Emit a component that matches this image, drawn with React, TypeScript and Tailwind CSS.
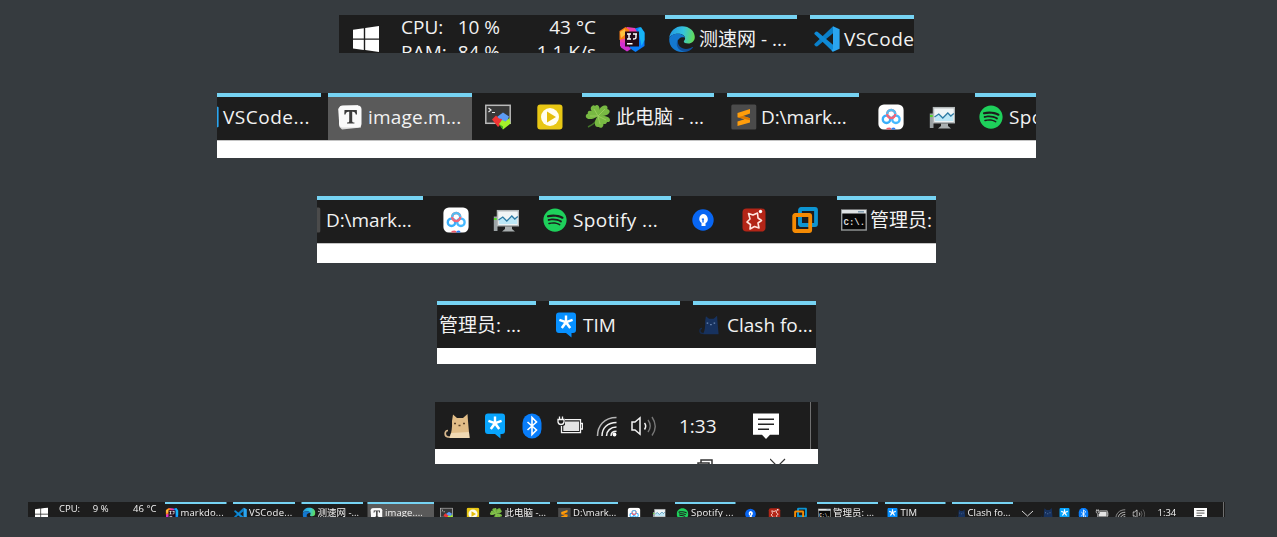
import React from "react";
import { FaSpotify } from "react-icons/fa";

type P = { children?: React.ReactNode; className?: string };

const Svg = ({ children, className = "" }: P) => (
  <svg viewBox="0 0 26 26" className={`h-[26px] w-[26px] shrink-0 ${className}`} fill="none">
    {children}
  </svg>
);

const Windows = ({ className }: P) => (
  <Svg className={className}>
    <path fill="#fff" d="M0 3.7 10.8 2.2v10.3H0zM12.2 2 26 0v12.500H12.200zM0 13.800h10.800V24L0 22.500zM12.200 13.800H26V26l-13.800-1.900z" />
  </Svg>
);

const Idea = ({ className }: P) => (
  <Svg className={className}>
    <path fill="#087cfa" d="m14 3 7-2 4.500 5v14l-9 6-6-4z" />
    <path fill="#17b4f5" d="m19 3 3-2 3.500 6v7l-3 6z" />
    <path fill="#e93db0" d="M1 8 8 1l8 1 2 4-8 14-3 4-6-4z" />
    <path fill="#f97a12" d="m.5 5 6-4 4 3-2 8-8 2z" />
    <path fill="#fdc23d" d="m1 6 5-3 1 5-5 4z" />
    <path fill="#d22fd0" d="m1 16 6 1 5 6-4 2.500-6-4z" />
    <path fill="#220b18" d="M6 5.500h14v15H6z" />
    <path stroke="#fff" strokeWidth="1.400" d="M8 8h4M10 8v5M8 13h4M14 8h4M17 8v3.500q0 1.700-3 1.500M8 17.800h5.500" />
  </Svg>
);

const Edge = ({ className }: P) => (
  <Svg className={className}>
    <defs>
      <linearGradient id="edgeTop" x1="2" y1="6" x2="25" y2="11" gradientUnits="userSpaceOnUse">
        <stop stopColor="#249de2" />
        <stop offset=".5" stopColor="#34c3df" />
        <stop offset="1" stopColor="#62dc58" />
      </linearGradient>
    </defs>
    <path fill="url(#edgeTop)" d="M.2 12C1 5 6.500.2 13 .2c7.500 0 12.800 5 12.800 10.800 0 4-3 6.500-6.500 6.500-3 0-4.500-1-4.500-2 0-.8 1.300-1.300 1.300-3.200 0-2.500-3-4.600-7-4.600C5 7.700 1.500 9.500.2 12" />
    <path fill="#1478cf" d="M.2 13C.7 9.500 4.800 7.700 9 7.700c3.800 0 6.600 1.700 7 4-3-1.500-7.500.5-7.500 4.800 0 4.500 4.500 9 9.500 8.500-1.500.7-3.300 1-5 1C5.500 26 0 20.500.2 13" />
    <path fill="#10509c" d="M9 13.500c-1.200 6 3.500 9.500 8 9.500 3 0 5-1.200 6.200-2 .5-.2.900.2.600.7C21.500 24.800 18 26 15.500 25.600 8.500 25 6 18 9 13.500" />
  </Svg>
);

const Code = ({ className }: P) => (
  <Svg className={className}>
    <path fill="#0a7fc9" d="M19 .300v7L3.500 20.200 2 20.500.400 19V18z" />
    <path fill="#0f8ad6" d="M19 25.700v-7L3.500 5.800 2 5.500.400 7V8z" />
    <path fill="#2aa5f0" d="M19 .200 25.600 3.300v19.400L19 25.800l-1.500-1 1.500-2z" />
  </Svg>
);

const Typora = ({ className }: P) => (
  <Svg className={className}>
    <path fill="#d9d9d9" d="M1 5 3.500 2 21 1l3 22.500L5 25.500 2.500 23z" />
    <rect x="2" y="1.500" width="22.500" height="22" rx="4" fill="#fafafa" />
    <path fill="#3b3b3b" d="M7.500 6h12.300l.2 4.500h-1.300c-.4-2-.9-2.800-3-2.800h-.5V17c0 1.200.7 1.400 2.200 1.500v1H10v-1c1.600-.1 2.200-.3 2.200-1.500V7.700h-.7c-2 0-2.500.8-3 2.800H7.300z" />
  </Svg>
);

const MobaTerm = ({ className }: P) => (
  <Svg className={className}>
    <rect x=".8" y="1.300" width="24.400" height="18" fill="#383838" stroke="#b9b9b9" strokeWidth="1.500" />
    <path stroke="#e5e5e5" strokeWidth="1.200" d="m3.500 4 2.500 2-2.500 2M7 8.500h3" />
    <path fill="#5c9bf4" d="m12 13 6-4.500 6 4-2 5-6 1z" />
    <path fill="#f03434" d="m7 15.500 4-4 3 3 3 .500-1 5-3 3z" />
    <path fill="#a4f02b" d="m14 20 3-4 3.500 1.500 4-3.500 1 5.500-7.500 6z" />
    <path fill="#3fae22" d="m14 20 4 2.500v3z" />
  </Svg>
);

const Player = ({ className }: P) => (
  <Svg className={className}>
    <rect x=".3" y=".5" width="25.200" height="25" rx="3" fill="#e8c714" />
    <circle cx="13" cy="13" r="9" fill="#fffdf0" />
    <path fill="#e5bd0b" d="m10 7.500 9 5.500-9 5.500z" />
  </Svg>
);

const Clover = ({ className }: P) => (
  <Svg className={className}>
    <path d="M13 12Q12 19 3 23" stroke="#427529" strokeWidth="1.600" />
    <g fill="#78b943">
      <path d="M13 12C5 8 5 4 6.500 2.500c2-2 3-1 3.500-.5 3-3 7 2 3 10" />
      <path d="M13 12c0-9 5-11 8-10.500 2 .8 1.500 2.500 1.300 3.500C27.500 6.500 24 13 13 12" />
      <path d="M13 12C6 17 1 15 .800 12.500c-.1-2 1-2.500 2-2.800C2 5 8 6 13 12" />
      <path d="M13 12c9-1 12.500 2 12 4.500-.4 1.800-2 1.700-3 1.500-.5 3-6 4-9-6" />
      <path d="M13 12c7 6 6 10 4 11.500-1.500.7-2.500.2-3.200-.5C9.500 24 8 18 13 12" />
    </g>
    <path d="m13 12-4-7m4 7 7-7m-7 7H5m8 0 8 4m-8-4 2 8" stroke="#a5d664" strokeWidth=".7" />
  </Svg>
);

const Sublime = ({ className }: P) => (
  <Svg className={className}>
    <rect x=".3" y=".5" width="25" height="25" rx="1.500" fill="#4b4b4b" />
    <path fill="#ff9d0b" d="m6.500 9 12.500-4v4.500L12 12l7 2.300v4.200L6.500 22v-4.500l7-2.200-7-2z" />
    <path fill="#dc7800" d="m6.500 13.300 5.500-1.300 7 2.300v2z" />
  </Svg>
);

const Baidu = ({ className }: P) => (
  <Svg className={className}>
    <rect x=".4" y=".5" width="25.200" height="25" rx="5.500" fill="#fff" />
    <circle cx="8.500" cy="15.300" r="3.700" stroke="#3aaefa" strokeWidth="2.400" />
    <circle cx="17.900" cy="15.300" r="3.700" stroke="#45b9ff" strokeWidth="2.400" />
    <circle cx="13.200" cy="10" r="4" stroke="#f36577" strokeWidth="2.400" />
    <path d="M9.200 10A4 4 0 0 1 17.200 10" stroke="#55bbef" strokeWidth="2.400" />
    <path fill="#f15a6a" d="M8.500 24q5-1.500 5 1.500h-5z" />
    <path fill="#287cf3" d="M13.500 24q4-1.500 4 1.500h-4z" />
  </Svg>
);

const Monitor = ({ className }: P) => (
  <Svg className={className}>
    <rect x=".8" y="9.500" width="3.700" height="14.500" fill="#9ba2a4" />
    <path fill="#57d62a" d="M1 11h4v2H1z" />
    <rect x="4.500" y="3.700" width="21" height="15" fill="#f0f5f6" stroke="#b2b7b8" strokeWidth="1.500" />
    <path fill="#bde7f6" d="m6 13 4-3 4 4 5-4 5 2v5H6z" />
    <path stroke="#2d7ba5" strokeWidth="1.300" d="m5.500 13 4.300-3 4 4 5-5 3 3 3-2.500" />
    <path fill="#a9afb0" d="M12 19.500h7v2.500l3 2.500H9l3-2.500z" />
  </Svg>
);

const Spotify = ({ className = "" }: P) => (
  <div className={`flex h-[26px] w-[26px] shrink-0 items-center justify-center ${className}`}>
    <FaSpotify className="h-[24px] w-[24px] text-[#1ed05b]" />
  </div>
);

const Pin = ({ className }: P) => (
  <Svg className={className}>
    <circle cx="13" cy="13" r="10.700" fill="#0866f3" />
    <path fill="#fff" d="M13 7a5 5 0 0 1 2.500 9.200V19h-4v-3A5 5 0 0 1 13 7" />
    <path stroke="#0866f3" strokeWidth="1.300" d="M13 11.500v4M11.800 12.200h2.200" />
  </Svg>
);

const Star = ({ className }: P) => (
  <Svg className={className}>
    <rect x="1.500" y="1.500" width="23" height="23" rx="4" fill="#b32517" />
    <path stroke="#ffe5df" strokeWidth="1.600" strokeLinejoin="round" d="m7.500 6.500 4.500 1.500 4.500-2 .5 5 3.500 2.500-3.500 2.500 1 5-4.500-1.500-4.500 2.500.5-4.500-3.500-2.500 3-3z" />
    <circle cx="19.500" cy="4.500" r="1.700" fill="#fff" />
  </Svg>
);

const VMware = ({ className }: P) => (
  <Svg className={className}>
    <rect x="8" y="2" width="16" height="16" rx="1" stroke="#0d95d2" strokeWidth="3.800" />
    <rect x="2.200" y="8" width="16" height="16" rx="1" stroke="#f58b04" strokeWidth="3.800" />
    <path stroke="#0d95d2" strokeWidth="3.800" d="M8 10v6q0 2 2 2h6" />
  </Svg>
);

const Cmd = ({ className }: P) => (
  <Svg className={className}>
    <rect x=".7" y="3" width="24.500" height="20" fill="#080808" stroke="#969a9b" strokeWidth="1.400" />
    <path fill="#dfe2e3" d="M1 3h24v3.500H1z" />
    <path fill="#819daf" d="M17 4h6v1.500h-6z" />
    <text x="2.500" y="18" fill="#d8d8d8" fontFamily="Liberation Mono" fontSize="9" fontWeight="bold">C:\.</text>
  </Svg>
);

const Bubble = ({ className, fill = "#0790ff" }: P & { fill?: string }) => (
  <Svg className={className}>
    <path fill={fill} d="M6 .500h14a3 3 0 0 1 3 3V18a3 3 0 0 1-3 3h-1.500v4.500L13 21H6a3 3 0 0 1-3-3V3.500a3 3 0 0 1 3-3" />
    <path fill="#fff" d="M11.800 3.500h2.400v5l5-1.800.8 2.200-5 1.800 3.200 4.600-2 1.400L13 12.500l-3.200 4.200-2-1.400 3.200-4.600-5-1.800.8-2.200 5 1.800z" />
  </Svg>
);

const Cat = ({ className, tan = false }: P & { tan?: boolean }) => (
  <Svg className={className}>
    <path stroke={tan ? "#d9b98e" : "#162c50"} strokeWidth="1.700" d="M4 17.500c-3.500 0-4 6 0 6.500h6" />
    <path fill={tan ? "#e2bd87" : "#17325f"} d="M5.500 25q3-7 2.500-17L9 1.500 13 5h6l4.500-4L24 8l1.500 17z" />
    {tan && <path fill="#f1d9b2" d="m7 20 18-1 .5 6H5.500z" />}
    <path stroke={tan ? "#5c432b" : "#6f8bb5"} strokeWidth="1.500" d="M10 10.500h2M19 10.500h2M14.500 12.500h2" />
  </Svg>
);

const Bluetooth = ({ className }: P) => (
  <Svg className={className}>
    <rect x="3.500" y=".5" width="19" height="25" rx="9.500" fill="#087dfa" />
    <path stroke="#fff" strokeWidth="1.600" d="m8.500 9 9 8-4.500 4.500v-17l4.500 4.500-9 8" />
  </Svg>
);

const Battery = ({ className }: P) => (
  <Svg className={className}>
    <path stroke="#f4f4f4" strokeWidth="1.300" d="M8 6.700h15.500v13H4.500V13M24 10.500h1.500v5.500H24" />
    <path fill="#e4e4e4" d="M8 8.500h14v9.500H6.300v-5l1.700-1z" />
    <path fill="#1d1d1d" stroke="#f4f4f4" strokeWidth="1.300" d="M1 6.500h6V9Q6.500 11.500 4 11.500T1 9zM2.500 3.500v3M5.500 3.500v3" />
  </Svg>
);

const Wifi = ({ className }: P) => (
  <Svg className={className}>
    <path stroke="#b3b3b3" strokeWidth="1.500" d="M3.500 23C3.500 13 10 4.500 22.500 4.500" />
    <path stroke="#f1f1f1" strokeWidth="1.500" d="M8 23C8 15 13.500 9.500 22.500 9.500M12.500 23c0-5 4-9 10-9M17 23c0-3 2-4.700 5.500-4.700" />
    <circle cx="20.500" cy="21.500" r="1.900" fill="#fff" />
  </Svg>
);

const Speaker = ({ className }: P) => (
  <Svg className={className}>
    <path stroke="#f2f2f2" strokeWidth="1.500" d="M1 9h3l5-4.200v16.400L4 17H1z" />
    <path stroke="#f2f2f2" strokeWidth="1.500" d="M13.500 10q2.400 3 0 6.500" />
    <path stroke="#777" strokeWidth="1.400" d="M17 7q4.500 6 0 12M21 4q6.500 9.500 0 18.500" />
  </Svg>
);

const Notice = ({ className }: P) => (
  <Svg className={className}>
    <path fill="#fff" d="M0 .500h26v21.300h-9L13 26l-4-4.200H0z" />
    <path stroke="#252525" strokeWidth="1.500" d="M5 6.200h16M5 11.200h16M5 16.200h11" />
  </Svg>
);

const Chevron = ({ className }: P) => (
  <Svg className={className}>
    <path stroke="#d5d5d5" strokeWidth="2" d="m2 7 11 10L24 7" />
  </Svg>
);

const Label = ({ children, className = "" }: P) => (
  <span data-label="" className={`shrink-0 whitespace-pre leading-[26px] ${className}`}>{children}</span>
);

const Task = ({ children, className = "" }: P) => (
  <div className={`flex h-[47px] shrink-0 items-center gap-[4px] border-t-[4px] border-[#76d3f3] pb-[3px] ${className}`}>
    {children}
  </div>
);

const Bar = ({ children, className = "" }: P) => (
  <div className={`flex h-[47px] shrink-0 items-center bg-[#1d1d1d] ${className}`}>{children}</div>
);

const Strip = ({ children, className = "" }: P) => (
  <section className={`flex flex-col overflow-hidden bg-white ${className}`}>{children}</section>
);

const Stats = ({ cpu, temp, ram, net, className = "" }: { cpu: string; temp: string; ram: string; net: string; className?: string }) => (
  <div className={`w-[195px] shrink-0 self-start leading-[25px] ${className}`}>
    <div className="flex">
      <span className="flex w-[99px] justify-between"><span>CPU:</span><span>{cpu}</span></span>
      <span className="w-[96px] text-right">{temp}</span>
    </div>
    <div className="flex">
      <span className="flex w-[99px] justify-between"><span>RAM:</span><span>{ram}</span></span>
      <span className="w-[96px] text-right">{net}</span>
    </div>
  </div>
);

export default function App() {
  return (
    <main className="flex h-[537px] w-full flex-col items-center overflow-hidden bg-[#363b3f] pt-[15px] pr-6 font-['Open_Sans','Noto_Sans_CJK_SC',sans-serif] text-[19px] text-[#f2f2f2]">
      <Strip className="h-[38px] w-[575px]">
        <Bar>
          <Windows className="ml-[14px]" />
          <Stats className="ml-[22px]" cpu="10 %" temp="43 °C" ram="84 %" net="1.1 K/s" />
          <Idea className="ml-[23px]" />
          <Task className="ml-[20px] w-[132px] pl-[4px]"><Edge /><Label>测速网 - ...</Label></Task>
          <Task className="ml-[13px] w-[132px] pl-[4px]"><Code /><Label className="tracking-[0.5px]">VSCode...</Label></Task>
        </Bar>
      </Strip>

      <Strip className="mt-[40px] h-[65px] w-[819px]">
        <Bar>
          <Task className="-ml-[28px] w-[132px] pl-[4px]"><Code /><Label className="tracking-[0.5px]">VSCode...</Label></Task>
          <Task className="ml-[7px] w-[144px] bg-[#5a5a5a] pl-[9px]"><Typora /><Label className="ml-px tracking-[0.2px]">image.m...</Label></Task>
          <MobaTerm className="ml-[13px]" />
          <Player className="ml-[26px]" />
          <Task className="ml-[19px] w-[132px] pl-[3px]"><Clover /><Label className="ml-px">此电脑 - ...</Label></Task>
          <Task className="ml-[13px] w-[132px] pl-[4px]"><Sublime /><Label className="tracking-[-0.1px]">D:\mark...</Label></Task>
          <Baidu className="ml-[19px]" />
          <Monitor className="ml-[25px]" />
          <Task className="ml-[20px] w-[132px] pl-[3px]"><Spotify /><Label className="ml-px tracking-[0.4px]">Spotify ...</Label></Task>
        </Bar>
        <div className="h-px shrink-0 bg-[#c4c4c4]" />
      </Strip>

      <Strip className="mt-[38px] h-[67px] w-[619px]">
        <Bar>
          <Task className="-ml-[26px] w-[132px] pl-[4px]"><Sublime /><Label className="ml-px tracking-[-0.1px]">D:\mark...</Label></Task>
          <Baidu className="ml-[20px]" />
          <Monitor className="ml-[24px]" />
          <Task className="ml-[20px] w-[132px] pl-[3px]"><Spotify /><Label className="ml-px tracking-[0.4px]">Spotify ...</Label></Task>
          <Pin className="ml-[19px]" />
          <Star className="ml-[25px]" />
          <VMware className="ml-[25px]" />
          <Task className="ml-[19px] w-[132px] pl-[4px]"><Cmd /><Label className="-ml-px">管理员: ...</Label></Task>
        </Bar>
        <div className="h-px shrink-0 bg-[#c4c4c4]" />
      </Strip>

      <Strip className="mt-[38px] h-[63px] w-[379px]">
        <Bar>
          <Task className="w-[99px] pl-[2px]"><Label>管理员: ...</Label></Task>
          <Task className="ml-[13px] w-[131px] pl-[4px]"><Bubble /><Label>TIM</Label></Task>
          <Task className="ml-[13px] w-[123px] pl-[6px]"><Cat className="h-[20px]! w-[20px]!" /><Label className="ml-[4px]">Clash fo...</Label></Task>
        </Bar>
      </Strip>

      <Strip className="mt-[38px] h-[62px] w-[383px]">
        <Bar>
          <Cat tan className="ml-[9px]" />
          <Bubble fill="#08a4fc" className="ml-[12px]" />
          <Bluetooth className="ml-[11px]" />
          <Battery className="ml-[12px]" />
          <Wifi className="ml-[11px]" />
          <Speaker className="ml-[11px]" />
          <Label className="ml-[22px] w-[53px]">1:33</Label>
          <Notice className="ml-[21px]" />
          <div className="ml-[31px] h-full w-px bg-[#707070]" />
        </Bar>
        <div className="flex pt-[9px] text-[#333]">
          <svg viewBox="0 0 17 12" className="ml-[262px] h-[12px] w-[17px] shrink-0" fill="none" stroke="currentColor" strokeWidth="1.500"><path d="M1 5h11v12H1zM4 5V2h11v12" /></svg>
          <svg viewBox="0 0 16 16" className="ml-[56px] h-[16px] w-[16px] shrink-0" fill="none" stroke="currentColor" strokeWidth="1.200"><path d="m0 1 15 15M15 1 0 16" /></svg>
        </div>
      </Strip>

      <Strip className="mt-[38px] h-[15px] w-[1197px]">
        <Bar className="w-[2394px] origin-top-left scale-50 [&_[data-label]]:mb-[6px]">
          <Windows className="ml-[14px]" />
          <Stats className="ml-[22px]" cpu="9 %" temp="46 °C" ram="87 %" net="0.9 K/s" />
          <Task className="ml-[17px] w-[123px] pl-[1px]"><Idea /><Label className="tracking-[0.3px]">markdo...</Label></Task>
          <Task className="ml-[13px] w-[124px] pl-[2px]"><Code /><Label className="tracking-[0.5px]">VSCode...</Label></Task>
          <Task className="ml-[13px] w-[123px] pl-[2px]"><Edge /><Label>测速网 -...</Label></Task>
          <Task className="ml-[9px] w-[133px] bg-[#5a5a5a] pl-[5px]"><Typora /><Label className="tracking-[0.2px]">image....</Label></Task>
          <MobaTerm className="ml-[12px]" />
          <Player className="ml-[27px]" />
          <Task className="ml-[19px] w-[122px] pl-[1px]"><Clover /><Label>此电脑 -...</Label></Task>
          <Task className="ml-[14px] w-[122px] pl-[2px]"><Sublime /><Label>D:\mark...</Label></Task>
          <Baidu className="ml-[19px]" />
          <Monitor className="ml-[24px]" />
          <Task className="ml-[19px] w-[121px] pl-[2px]"><Spotify /><Label className="tracking-[0.4px]">Spotify ...</Label></Task>
          <Pin className="ml-[17px]" />
          <Star className="ml-[22px]" />
          <VMware className="ml-[26px]" />
          <Task className="ml-[20px] w-[122px] pl-[2px]"><Cmd /><Label>管理员: ...</Label></Task>
          <Task className="ml-[14px] w-[121px] pl-[2px]"><Bubble /><Label className="-ml-px">TIM</Label></Task>
          <Task className="ml-[13px] w-[122px] pl-[7px]"><Cat className="h-[20px]! w-[20px]!" /><Label>Clash fo...</Label></Task>
          <Chevron className="ml-[16px]" />
          <Cat className="ml-[12px]" />
          <Bubble fill="#08a4fc" className="ml-[10px]" />
          <Bluetooth className="ml-[12px]" />
          <Battery className="ml-[11px]" />
          <Wifi className="ml-[11px]" />
          <Speaker className="ml-[11px]" />
          <Label className="ml-[24px] w-[53px]">1:34</Label>
          <Notice className="ml-[20px]" />
          <div className="ml-[32px] h-full w-[2px] bg-[#707070]" />
        </Bar>
      </Strip>
    </main>
  );
}
